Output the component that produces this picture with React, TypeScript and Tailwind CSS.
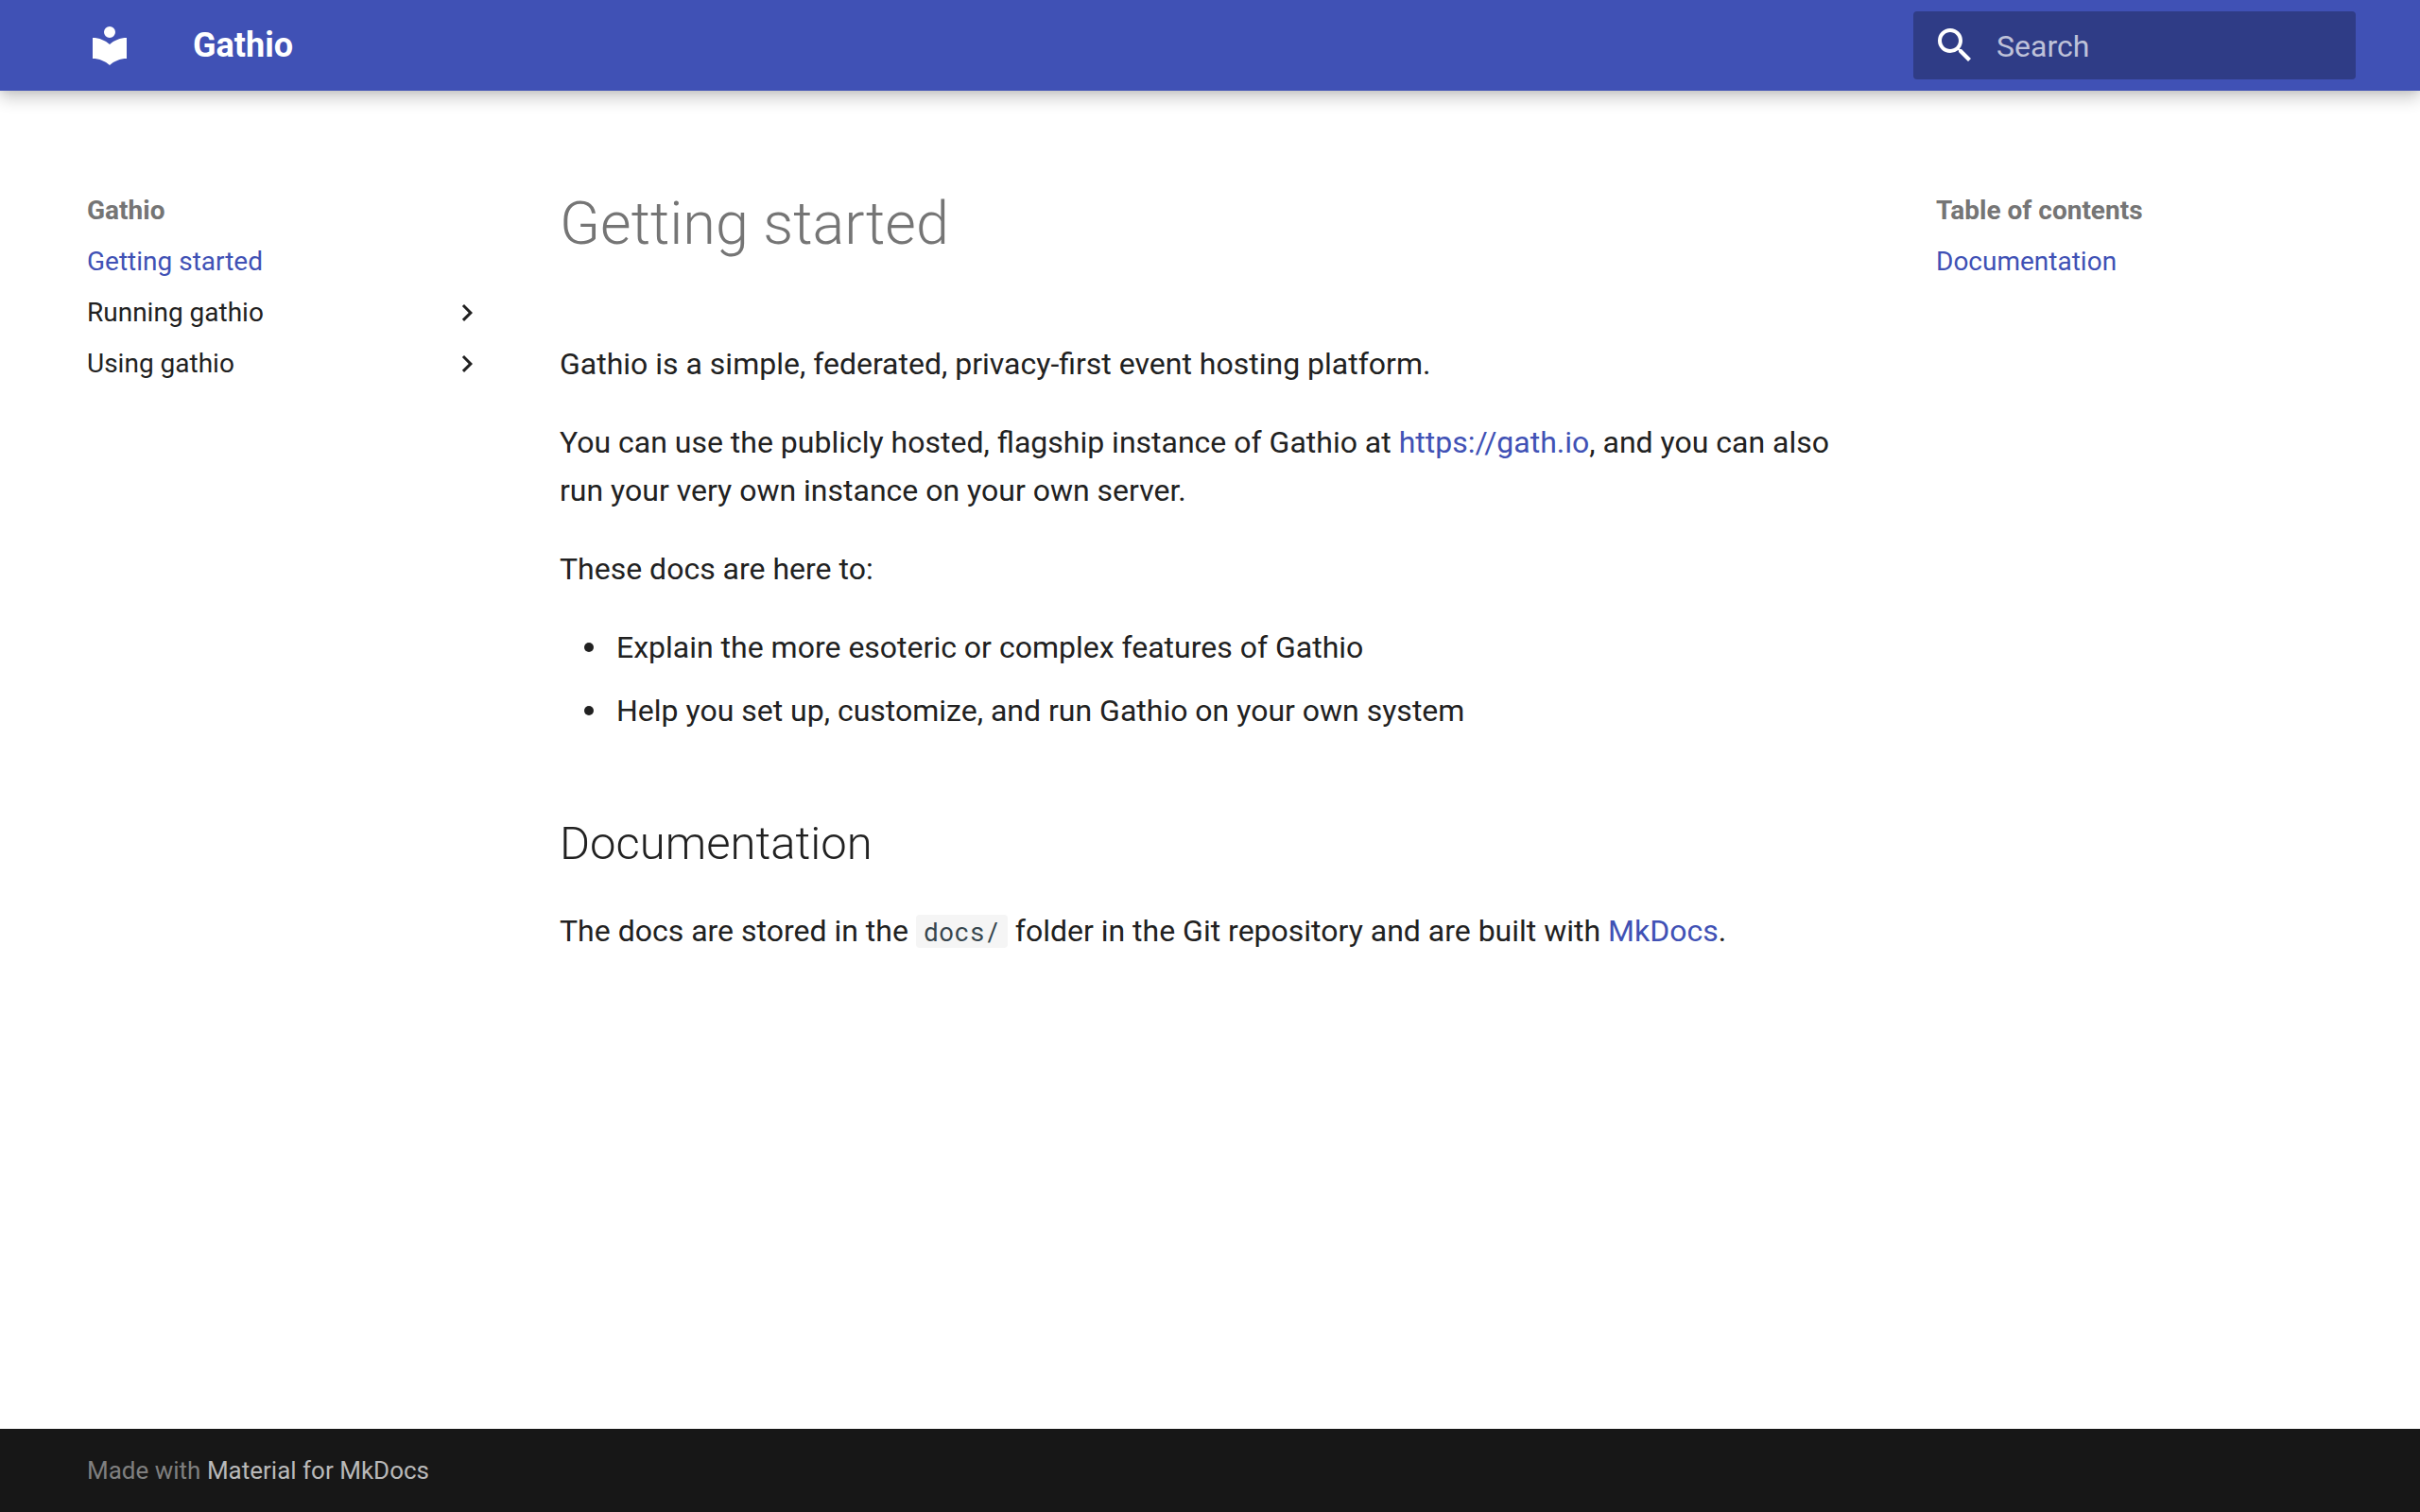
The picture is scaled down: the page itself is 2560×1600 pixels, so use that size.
import { useState, type ReactNode } from 'react';

type NavItem = {
  label: string;
  href: string;
  active?: boolean;
  section?: boolean;
};

const navItems: NavItem[] = [
  { label: 'Getting started', href: '#', active: true },
  { label: 'Running gathio', href: '#running', section: true },
  { label: 'Using gathio', href: '#using', section: true },
];

const tocItems: NavItem[] = [{ label: 'Documentation', href: '#documentation', active: true }];

const goals = [
  'Explain the more esoteric or complex features of Gathio',
  'Help you set up, customize, and run Gathio on your own system',
];

function Icon({ path, className }: { path: string; className: string }) {
  return (
    <svg viewBox="0 0 24 24" fill="currentColor" aria-hidden="true" className={className}>
      <path d={path} />
    </svg>
  );
}

function TextLink({ href, children }: { href: string; children: ReactNode }) {
  return (
    <a href={href} className="text-[#4051b5] hover:text-[#526cfe]">
      {children}
    </a>
  );
}

function SideNav({ title, items }: { title: string; items: NavItem[] }) {
  return (
    <nav aria-label={title} className="w-[484px] shrink-0 px-8 py-12 text-[28px] leading-[38px]">
      <h2 className="font-bold text-[#757575]">{title}</h2>
      <ul>
        {items.map((item) => (
          <li key={item.label} className="mt-4">
            <a
              href={item.href}
              className={`flex items-center justify-between hover:text-[#526cfe] ${
                item.active ? 'text-[#4051b5]' : 'text-[#212121]'
              }`}
            >
              {item.label}
              {item.section && (
                <Icon className="size-9" path="M8.59 16.58 13.17 12 8.59 7.41 10 6l6 6-6 6z" />
              )}
            </a>
          </li>
        ))}
      </ul>
    </nav>
  );
}

function Header() {
  const [query, setQuery] = useState('');

  return (
    <header className="sticky top-0 z-10 bg-[#4051b5] text-white shadow-[0_0_8px_#0000001a,0_8px_16px_#00000033]">
      <div className="mx-auto flex h-24 max-w-[2440px] items-center pl-8 pr-2">
        <a href="#" aria-label="Gathio" className="shrink-0">
          <Icon
            className="size-12"
            path="M12 8a3 3 0 0 0 3-3 3 3 0 0 0-3-3 3 3 0 0 0-3 3 3 3 0 0 0 3 3m0 3.54C9.64 9.35 6.5 8 3 8v11c3.5 0 6.64 1.35 9 3.54 2.36-2.19 5.5-3.54 9-3.54V8c-3.5 0-6.64 1.35-9 3.54"
          />
        </a>
        <span className="ml-16 flex-1 text-[36px] font-bold leading-[48px]">Gathio</span>
        <form
          role="search"
          onSubmit={(e) => e.preventDefault()}
          className="flex h-[72px] w-[468px] items-center gap-5 rounded bg-[#00000042] pl-5 pr-4"
        >
          <label htmlFor="search">
            <Icon
              className="size-12"
              path="M9.5 3A6.5 6.5 0 0 1 16 9.5c0 1.61-.59 3.09-1.56 4.23l.27.27h.79l5 5-1.5 1.5-5-5v-.79l-.27-.27A6.52 6.52 0 0 1 9.5 16 6.5 6.5 0 0 1 3 9.5 6.5 6.5 0 0 1 9.5 3m0 2C7 5 5 7 5 9.5S7 14 9.5 14 14 12 14 9.5 12 5 9.5 5"
            />
          </label>
          <input
            id="search"
            type="text"
            aria-label="Search"
            placeholder="Search"
            value={query}
            onChange={(e) => setQuery(e.target.value)}
            className="h-full min-w-0 flex-1 bg-transparent pt-0.5 text-[32px] outline-none placeholder:text-white/70"
          />
        </form>
      </div>
    </header>
  );
}

export default function App() {
  return (
    <div className="flex min-h-screen flex-col bg-white font-[Roboto,sans-serif] text-[#212121] antialiased">
      <Header />

      <main className="mx-auto flex w-full max-w-[2440px] grow pt-[60px]">
        <SideNav title="Gathio" items={navItems} />

        <article className="mx-12 min-w-0 flex-1 pb-12 pt-10 text-[32px] leading-[51px]">
          <h1 className="mb-[82px] text-[63px] font-light leading-[82px] text-[#757575]">Getting started</h1>
          <p className="mb-8">Gathio is a simple, federated, privacy-first event hosting platform.</p>
          <p className="mb-8">
            You can use the publicly hosted, flagship instance of Gathio at{' '}
            <TextLink href="https://gath.io">https://gath.io</TextLink>, and you can also run your very own
            instance on your own server.
          </p>
          <p className="mb-8">These docs are here to:</p>
          <ul className="space-y-4 pl-[60px]">
            {goals.map((goal) => (
              <li
                key={goal}
                className="relative before:absolute before:-left-[34px] before:top-5 before:size-[10px] before:rounded-full before:bg-current"
              >
                {goal}
              </li>
            ))}
          </ul>
          <h2 id="documentation" className="mb-8 mt-20 text-[49px] font-light leading-[70px]">
            Documentation
          </h2>
          <p>
            The docs are stored in the{' '}
            <code className="rounded bg-[#f5f5f5] px-2 font-['Roboto_Mono','Liberation_Mono',monospace] text-[27px] text-[#36464e]">
              docs/
            </code>{' '}
            folder in the Git repository and are built with{' '}
            <TextLink href="https://www.mkdocs.org">MkDocs</TextLink>.
          </p>
        </article>

        <SideNav title="Table of contents" items={tocItems} />
      </main>

      <footer className="bg-[#171717] text-[26px] text-[#7f7f7f]">
        <div className="mx-auto flex h-[88px] max-w-[2440px] items-center px-8">
          <p>
            Made with{' '}
            <a href="https://squidfunk.github.io/mkdocs-material/" className="text-[#b9b9b9] hover:text-white">
              Material for MkDocs
            </a>
          </p>
        </div>
      </footer>
    </div>
  );
}
